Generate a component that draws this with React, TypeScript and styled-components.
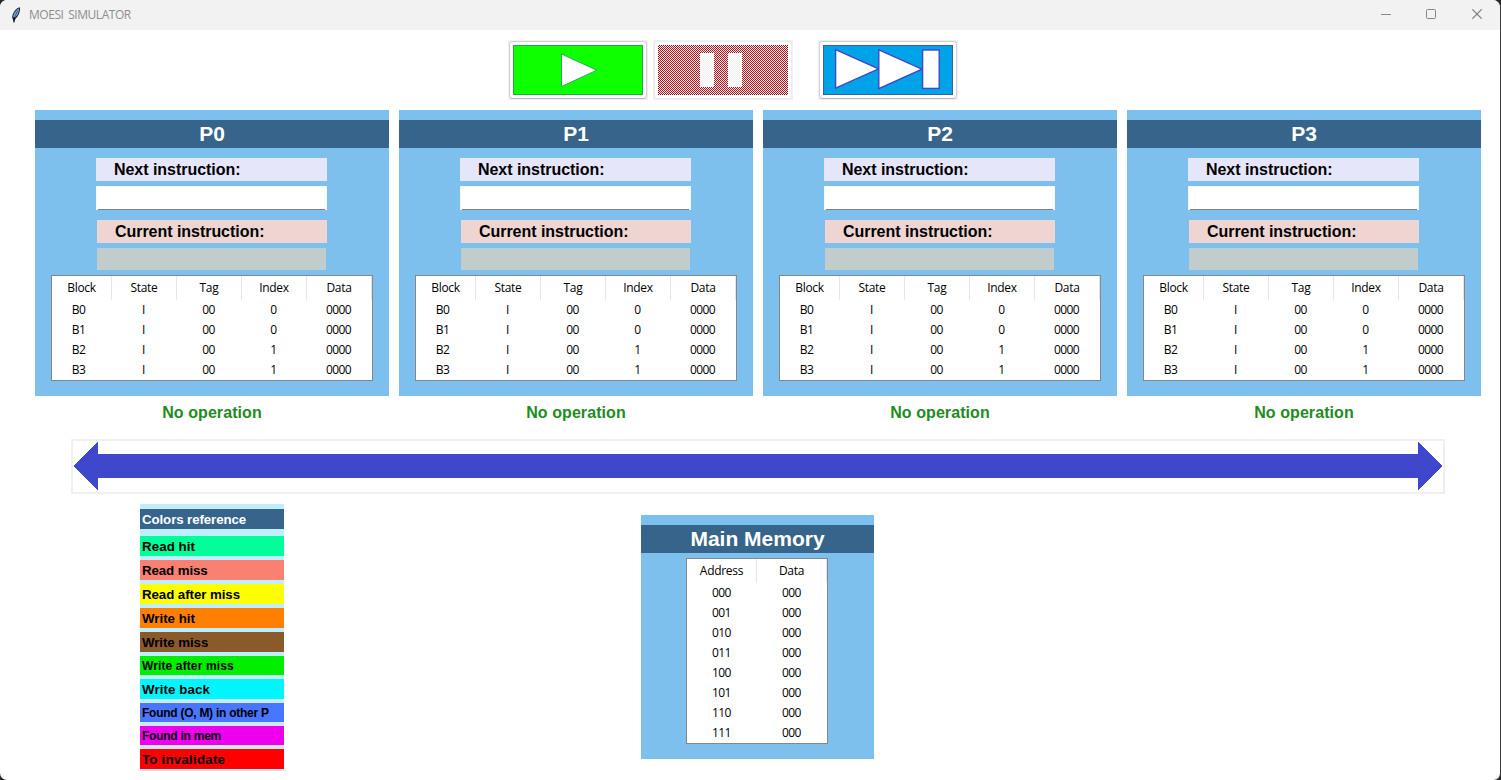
import React from "react";
import styled, { createGlobalStyle } from "styled-components";

const Global = createGlobalStyle`
  * { box-sizing: border-box; }
  html, body { margin: 0; padding: 0; background: #262626; overflow: hidden; }
`;

const arial = `"Liberation Sans", Arial, sans-serif`;
const system = `"Open Sans", "Noto Sans", sans-serif`;

const Window = styled.div`
  width: 1501px;
  height: 780px;
  display: flex;
  flex-direction: column;
  background: #fff;
  border-right: 1px solid #3a3a3a;
  border-radius: 7px 8px 7px 7px;
  overflow: hidden;
`;

const TitleBar = styled.header`
  height: 30px;
  flex: none;
  display: flex;
  align-items: center;
  background: #f2f2f2;
  padding-left: 9px;
`;

const Title = styled.span`
  flex: 1;
  margin-left: 6px;
  font: 12px/30px ${system};
  letter-spacing: -0.45px;
  word-spacing: 2px;
  color: #8e8e8e;
`;

const WindowControls = styled.div`
  display: flex;
  align-items: center;
  height: 28px;
  align-self: flex-start;
`;

const ControlSlot = styled.div<{ $w: number }>`
  width: ${(p) => p.$w}px;
  display: flex;
  svg { display: block; }
`;

const Toolbar = styled.div`
  height: 80px;
  flex: none;
  display: flex;
  align-items: flex-start;
  padding: 10px 0 0 508px;
`;

const ToolFrame = styled.div<{ $disabled?: boolean; $gap?: number }>`
  width: 140px;
  height: 60px;
  padding: 1px;
  background: #f0f0f0;
  margin-right: ${(p) => p.$gap ?? 0}px;
  button {
    display: block;
    width: 138px;
    height: 58px;
    padding: 3px;
    background: #fff;
    border: 1px solid ${(p) => (p.$disabled ? "#ebebeb" : "#d0d0d0")};
    border-bottom-color: ${(p) => (p.$disabled ? "#e8e8e8" : "#b8b8b8")};
    border-radius: 4px;
  }
  svg { display: block; }
`;

const Processors = styled.div`
  display: flex;
  gap: 10px;
  padding-left: 35px;
  flex: none;
`;

const Column = styled.div`
  width: 354px;
`;

const Panel = styled.section<{ $w: number; $h: number }>`
  width: ${(p) => p.$w}px;
  height: ${(p) => p.$h}px;
  background: #7dc0ee;
  padding-top: 10px;
`;

const PanelTitle = styled.h2`
  margin: 0;
  height: 28px;
  background: #36648b;
  color: #fff;
  text-align: center;
  font: bold 21px/28px ${arial};
`;

const FieldLabel = styled.div<{ $bg: string; $left: number; $top: number }>`
  height: 23px;
  margin: ${(p) => p.$top}px 0 0 ${(p) => p.$left}px;
  width: ${(p) => 292 - p.$left}px;
  padding-left: 18px;
  background: ${(p) => p.$bg};
  color: #000;
  font: bold 16px/23px ${arial};
  letter-spacing: -0.04px;
`;

const NextField = styled.div`
  width: 231px;
  height: 24px;
  margin: 5px 0 0 61px;
  padding: 0 1px;
  background: #fff;
  border: 1px solid #f4f8fb;
  border-bottom: 0;
  &::after {
    content: "";
    display: block;
    height: 1px;
    margin-top: 22px;
    background: #7b8288;
  }
`;

const CurrentField = styled.div`
  width: 229px;
  height: 22px;
  margin: 5px 0 0 62px;
  background: #c1cdcd;
`;

const Grid = styled.div<{ $cols: string; $left: number; $w: number }>`
  width: ${(p) => p.$w}px;
  margin: 5px 0 0 ${(p) => p.$left}px;
  border: 1px solid #828790;
  background: #fff;
  display: grid;
  grid-template-columns: ${(p) => p.$cols};
  grid-template-rows: 24px;
  grid-auto-rows: 20px;
  font: 12px/20px ${system};
  color: #000;
  text-align: center;
`;

const HeadCell = styled.div`
  line-height: 23px;
  letter-spacing: -0.3px;
  border-right: 1px solid #e5e5e5;
`;

const Cell = styled.div<{ $shift?: number }>`
  letter-spacing: -0.6px;
  padding-right: ${(p) => p.$shift ?? 1}px;
`;

const Status = styled.div`
  height: 43px;
  padding-top: 1px;
  text-align: center;
  color: #228b22;
  font: bold 16px/32px ${arial};
  letter-spacing: 0.07px;
`;

const Bus = styled.div`
  width: 1374px;
  height: 55px;
  flex: none;
  margin-left: 71px;
  border: 2px solid #f0f0f0;
  padding: 1px 0;
  svg { display: block; }
`;

const Lower = styled.div`
  display: flex;
  align-items: flex-start;
  padding: 10px 0 0 140px;
`;

const Legend = styled.div`
  width: 144px;
  height: 267px;
  background: linear-gradient(#bfefff 60%, #d4e4f6);
  padding-top: 5px;
  margin-right: 357px;
`;

const LegendTitle = styled.div`
  height: 20px;
  margin-bottom: 7px;
  padding-left: 2px;
  background: #36648b;
  color: #fff;
  font: bold 13.3px/22px ${arial};
  letter-spacing: -0.1px;
`;

const LegendItem = styled.div<{ $bg: string; $small?: boolean; $track: number }>`
  height: ${(p) => (p.$small ? 19 : 20)}px;
  margin-bottom: 4px;
  padding-left: 2px;
  background: ${(p) => p.$bg};
  color: #000;
  white-space: nowrap;
  font: bold ${(p) => (p.$small ? 12 : 13.3)}px/${(p) => (p.$small ? 21 : 22)}px ${arial};
  letter-spacing: ${(p) => p.$track}px;
`;

const MemoryWrap = styled.div`
  padding-top: 11px;
`;

const legend: { label: string; bg: string; small?: boolean; track: number }[] = [
  { label: "Read hit", bg: "#00fe9a", track: 0.08 },
  { label: "Read miss", bg: "#fa8072", track: -0.1 },
  { label: "Read after miss", bg: "#ffff00", track: -0.07 },
  { label: "Write hit", bg: "#ff8000", track: 0 },
  { label: "Write miss", bg: "#8b5a2b", track: -0.08 },
  { label: "Write after miss", bg: "#00ee00", small: true, track: 0.12 },
  { label: "Write back", bg: "#00f5ff", track: 0.1 },
  { label: "Found (O, M) in other P", bg: "#4876ff", small: true, track: -0.26 },
  { label: "Found in mem", bg: "#ee00ee", small: true, track: -0.25 },
  { label: "To invalidate", bg: "#ff0000", track: 0.22 },
];

const blocks = [
  ["B0", "I", "00", "0", "0000"],
  ["B1", "I", "00", "0", "0000"],
  ["B2", "I", "00", "1", "0000"],
  ["B3", "I", "00", "1", "0000"],
];

const addresses = ["000", "001", "010", "011", "100", "101", "110", "111"];

const Feather = () => (
  <svg width="14" height="18" viewBox="0 0 14 18">
    <path d="M10.6 1.2C8 1.8 5.2 4.6 3.8 8.2 3 10.4 3 11.4 3.6 13L5 15.2 6.8 12.6C9.2 10.4 10.4 7.6 10.9 4.6 11.1 3.2 11.2 1.6 10.6 1.2Z" fill="#20263a" />
    <path d="M10 2.2C7.6 3.6 5.4 6.2 4.4 9.4L4.2 11.8 6.8 10.8C9 8.4 10.1 5.6 10 2.2Z" fill="#78a4e0" />
    <path d="M8.8 4.6C7.4 7 6 10 5.4 12" stroke="#2b426e" strokeWidth=".8" fill="none" />
    <path d="M5.4 11.6L4.9 16.4" stroke="#0c0d10" strokeWidth="1.3" fill="none" />
  </svg>
);

const PlayIcon = () => (
  <svg width="130" height="50">
    <rect x=".5" y=".5" width="129" height="49" fill="#0dff00" stroke="#22a84c" />
    <path d="M48.5 9V41.5L83.8 25.2Z" fill="#fff" stroke="#22b14c" />
  </svg>
);

const PauseIcon = () => (
  <svg width="130" height="50" shapeRendering="crispEdges">
    <defs>
      <pattern id="stipple" width="2" height="2" patternUnits="userSpaceOnUse">
        <path d="M0 0h1v1h-1zM1 1h1v1h-1z" fill="#f0f0f0" />
      </pattern>
    </defs>
    <rect width="130" height="50" fill="#880015" />
    <rect x="1" y="1" width="128" height="48" fill="#bc141c" />
    <path d="M41 7h15v36h-15zM69 7h15v36h-15z" fill="#a41420" />
    <path d="M42 8h14v34h-14zM70 8h14v34h-14z" fill="#fff" />
    <rect width="130" height="50" fill="url(#stipple)" />
  </svg>
);

const SkipIcon = () => (
  <svg width="130" height="50">
    <rect x=".5" y=".5" width="129" height="49" fill="#00a2e8" stroke="#3a5fa8" />
    <g fill="#fff" stroke="#3f48cc" strokeWidth="1.4">
      <path d="M12.6 4.6V43.2L55.6 23.8Z" />
      <path d="M55.8 4.8V43.6L99 24.2Z" />
      <rect x="99.6" y="5" width="16.6" height="38.4" />
    </g>
  </svg>
);

export default function App() {
  return (
    <>
      <Global />
      <Window>
        <TitleBar>
          <Feather />
          <Title>MOESI SIMULATOR</Title>
          <WindowControls>
            <ControlSlot $w={45}>
              <svg width="10" height="11"><path d="M0 5.5h10" stroke="#8a8a8a" /></svg>
            </ControlSlot>
            <ControlSlot $w={46}>
              <svg width="10" height="10"><rect x=".5" y=".5" width="9" height="9" rx="1" fill="none" stroke="#858585" /></svg>
            </ControlSlot>
            <ControlSlot $w={28}>
              <svg width="10" height="10"><path d="M.3.3l9.4 9.4M9.7.3L.3 9.7" stroke="#777" strokeWidth="1.1" /></svg>
            </ControlSlot>
          </WindowControls>
        </TitleBar>
        <Toolbar>
          <ToolFrame $gap={5}><button aria-label="Play"><PlayIcon /></button></ToolFrame>
          <ToolFrame $gap={25} $disabled><button aria-label="Pause" disabled><PauseIcon /></button></ToolFrame>
          <ToolFrame><button aria-label="Skip"><SkipIcon /></button></ToolFrame>
        </Toolbar>
        <Processors>
          {["P0", "P1", "P2", "P3"].map((name) => (
            <Column key={name}>
              <Panel $w={354} $h={286}>
                <PanelTitle>{name}</PanelTitle>
                <FieldLabel $bg="#e6e6fa" $left={61} $top={10}>Next instruction:</FieldLabel>
                <NextField />
                <FieldLabel $bg="#eed5d2" $left={62} $top={10}>Current instruction:</FieldLabel>
                <CurrentField />
                <Grid $cols="60px repeat(4, 65px)" $left={16} $w={322}>
                  {["Block", "State", "Tag", "Index", "Data"].map((h) => (
                    <HeadCell key={h}>{h}</HeadCell>
                  ))}
                  {blocks.map((row) =>
                    row.map((v, i) => (
                      <Cell key={row[0] + i} $shift={i === 0 ? 7 : 2}>{v}</Cell>
                    ))
                  )}
                </Grid>
              </Panel>
              <Status>No operation</Status>
            </Column>
          ))}
        </Processors>
        <Bus>
          <svg width="1370" height="49" shapeRendering="crispEdges">
            <path d="M.5 24L25 -.5V12H1345V0L1369 24L1345 48V36H25V48.5Z" fill="#3f48cc" />
          </svg>
        </Bus>
        <Lower>
          <Legend>
            <LegendTitle>Colors reference</LegendTitle>
            {legend.map((l) => (
              <LegendItem key={l.label} $bg={l.bg} $small={l.small} $track={l.track}>{l.label}</LegendItem>
            ))}
          </Legend>
          <MemoryWrap>
            <Panel $w={233} $h={244}>
              <PanelTitle>Main Memory</PanelTitle>
              <Grid $cols="70px 70px" $left={45} $w={142}>
                <HeadCell>Address</HeadCell>
                <HeadCell>Data</HeadCell>
                {addresses.map((a) => (
                  <React.Fragment key={a}>
                    <Cell>{a}</Cell>
                    <Cell>000</Cell>
                  </React.Fragment>
                ))}
              </Grid>
            </Panel>
          </MemoryWrap>
        </Lower>
      </Window>
    </>
  );
}
